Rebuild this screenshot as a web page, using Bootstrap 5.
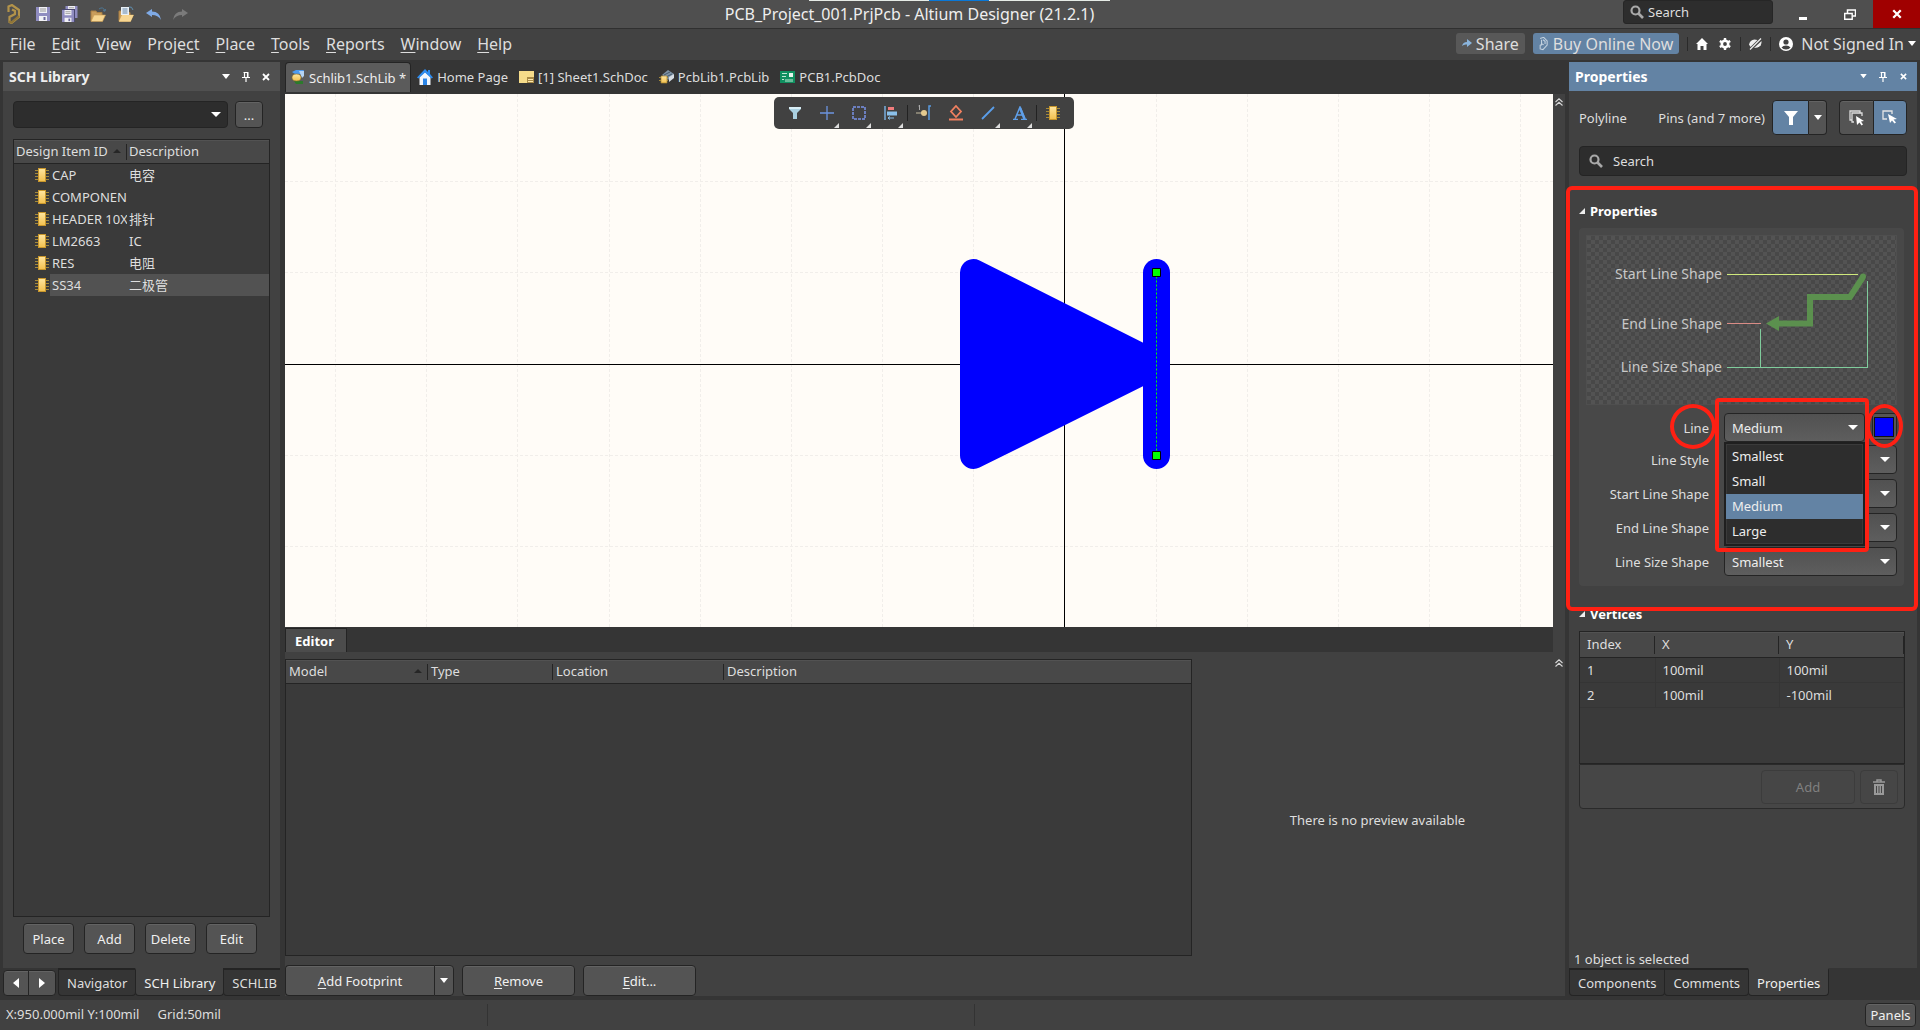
<!DOCTYPE html>
<html lang="en">
<head>
<meta charset="utf-8">
<meta name="viewport" content="width=device-width, initial-scale=1">
<title>PCB_Project_001.PrjPcb - Altium Designer (21.2.1)</title>
<link rel="stylesheet" href="https://cdn.jsdelivr.net/npm/bootstrap@5.3.0/dist/css/bootstrap.min.css">
<script src="https://cdn.jsdelivr.net/npm/bootstrap@5.3.0/dist/js/bootstrap.bundle.min.js"></script>
<style>
  :root { --edge:#242424; --pane:#414141; --deep:#353535; --field:#2d2d2d; --accent:#6383a4; --ink:#dedede; --mark:#ff2013; }
  body { font-family:"Noto Sans","Noto Sans CJK SC",sans-serif; font-size:13px; line-height:20px; color:var(--ink); background:var(--deep); }
  a { color:inherit; text-decoration:none; }
  svg { display:block; flex:none; }
  button, select, input { font:inherit; color:inherit; }
  ul { list-style:none; margin:0; padding:0; }
  u { text-underline-offset:2px; }

  .titlebar { height:29px; background:#4f4f4f; border-bottom:1px solid #303030; }
  .quick { gap:12px; padding:0 8px 0 7px; }
  .title-name { font-size:16px; color:#eee; }
  .top-stripe { top:0; left:50%; width:301px; height:1px; margin-left:-151px; background:linear-gradient(90deg,#e6ebe6 120px,#0a78d7 120px 180px,#e6ebe6 180px); }
  .title-search { width:150px; height:24px; background:var(--field); border:1px solid #262626; border-radius:3px; padding:0 6px; margin-right:6px; }
  .title-search input, .pane-search input { background:none; border:0; outline:0; width:100%; min-width:0; padding:0; }
  input::placeholder { color:var(--ink); opacity:1; }
  .win-btn { width:47px; height:28px; border:0; background:none; padding:0; color:#fff; }
  .win-close { background:#a00000; }

  .menubar { height:31px; background:#424242; font-size:16px; line-height:22px; padding:0 4px 2px 10px; }
  .menu-list { gap:16px; }
  .pill { height:21px; border-radius:3px; line-height:20px; border:0; padding:0 6px; gap:4px; }
  .pill-grey { background:#585858; } .pill-blue { background:var(--accent); }
  .bar-sep { width:1px; height:14px; background:#2a2a2a; }

  .workspace { gap:4px; padding:2px 3px 0 3px; min-height:0; }
  .side-left { flex:0 0 277px; min-width:0; overflow:hidden; } .side-right { flex:0 0 348px; min-width:0; }
  .mid-col { min-width:0; margin-left:1px; }
  .pane-head { height:29px; background:#505050; font-weight:700; font-size:14px; padding:0 4px 0 6px; color:#eee; }
  .pane-head.active-pane { background:var(--accent); color:#fff; }
  .pane-body { background:var(--pane); min-height:0; }
  .tool-mini { border:0; background:none; padding:0; width:20px; height:20px; }

  .tbtn { background:#545454; border:1px solid var(--edge); border-radius:4px; box-shadow:inset 0 1px 0 #636363; padding:0; color:#f0f0f0; display:flex; align-items:center; justify-content:center; }
  .combo { appearance:none; -webkit-appearance:none; background:#5a5a5a linear-gradient(#515151,#5e5e5e); border:1px solid var(--edge); border-radius:4px; height:29px; padding:0 8px 0 7px; color:#eee; width:100%; }
  .combo-wrap { position:relative; }
  .combo-wrap::after { content:""; position:absolute; right:7px; top:50%; margin-top:-3px; border:5px solid transparent; border-top-color:#fff; border-bottom:0; pointer-events:none; }
  .combo-dark { background:var(--field); height:27px; display:block; }
  .lib-pick { gap:7px; padding:10px 17px 11px 10px; }
  .dots-btn { width:28px; height:27px; }
  .grid-box { background:#3a3a3a; border:1px solid var(--edge); }
  .lib-box { margin:0 10px; }
  .grid-box table { table-layout:fixed; width:100%; border-collapse:collapse; }
  .grid-box th { font-weight:400; height:23px; background:#484848; border-bottom:1px solid var(--edge); padding:0 3px; position:relative; box-shadow:inset 0 1px 0 #525252; white-space:nowrap; }
  .split::after { content:""; position:absolute; right:0; top:4px; bottom:3px; width:1px; background:var(--edge); }
  .sort::before { content:""; position:absolute; right:6px; top:9px; border:4px solid transparent; border-bottom-color:#262626; border-top:0; }
  .grid-box .lib th { padding:0 2px; }
  .lib td { height:22px; padding:0 2px; white-space:nowrap; overflow:hidden; }
  .lib td:first-child { padding:0 0 0 21px; }
  .lib .part { gap:1px; } .lib .part span { flex:1; min-width:0; overflow:hidden; padding-left:2px; line-height:22px; }
  .lib .chosen span, .lib .chosen td + td { background:#525252; }
  .lib-btns { gap:10px; padding:6px 0 14px 20px; } .lib-btns .tbtn { width:51px; height:31px; }

  .ptab { height:28px; border:1px solid var(--edge); border-top-width:2px; border-radius:0 0 4px 4px; padding:0 8px; margin-right:-1px; display:flex; align-items:center; background:var(--deep); white-space:nowrap; color:var(--ink); }
  .ptab.on { background:var(--pane); border-top-color:var(--pane); color:#f0f0f0; }
  .ptab-long { flex:0 0 84px; }
  .pager { margin-right:2px; } .pager .tbtn { width:26px; height:26px; border-radius:4px 0 0 4px; } .pager .tbtn + .tbtn { border-radius:0 4px 4px 0; margin-left:-1px; width:28px; }

  .doc-tabs { height:32px; gap:5px; padding-bottom:2px; }
  .doc-tab { gap:4px; padding:0 3px; height:30px; white-space:nowrap; color:#ddd; }
  .doc-tab.open { background:#5b5b5b; border:1px solid var(--edge); border-bottom:0; border-radius:4px 4px 0 0; color:#eee; padding:0 4px; margin-right:-2px; }
  .canvas-box { height:533px; background:#fffcf7; min-height:0; }
  .canvas-box > svg { width:100%; height:100%; }
  .floatbar { top:3px; left:50%; transform:translateX(-145px); height:32px; background:var(--pane); border-radius:5px; padding:0 5px; }
  .fbtn { width:32px; height:32px; border:0; background:none; padding:0; position:relative; display:flex; align-items:center; justify-content:center; }
  .fbtn.more::after { content:""; position:absolute; right:4px; bottom:1px; border-style:solid; border-width:0 0 5px 5px; border-color:transparent transparent #ddd; }
  .fsep { width:1px; height:16px; background:#222; }
  .rail { flex:0 0 12px; background:var(--pane); padding:4px 2px; }
  .edit-strip { height:25px; background:var(--deep); margin-right:12px; box-shadow:12px 0 0 var(--pane); }
  .edit-tab { background:#4c4c4c; border:1px solid var(--edge); border-bottom:0; font-weight:700; padding:0 9px; color:#fff; height:24px; line-height:24px; width:62px; }
  .model-row { padding:7px 2px 0 0; }
  .model-box { flex:0 1 907px; }
  .foot-btns { gap:8px; padding:9px 0 0; } .foot-btns .tbtn { height:31px; }
  .foot-btns > .tbtn { width:113px; } .foot-btns .main-part { width:149px; } .foot-btns .drop-part { width:20px; }

  .filter-row { padding:9px 10px 11px; }
  .kinds { margin-right:7px; }
  .pane-search { height:30px; background:var(--field); border:1px solid var(--edge); border-radius:4px; padding:0 9px; gap:10px; margin:0 10px 14px; }
  .mode-btn { height:35px; width:34px; } .mode-drop { width:18px; margin-right:12px; } .mode-on { background:var(--accent); box-shadow:none; }
  .sec-title { font-weight:700; font-size:13px; color:#fff; gap:5px; height:20px; margin-bottom:7px; }
  .tri { border-style:solid; border-width:0 0 6px 6px; border-color:transparent transparent #eee; }
  .prop-sec { padding:11px 13px 21px 10px; }
  .prop-card { background:#484848; border-radius:4px; padding:7px 7px 10px; }
  .checker { background:repeating-conic-gradient(#484848 0 25%,#535353 0 50%) 0 0/8px 8px; border:1px solid #4f4f4f; }
  .frm { display:grid; grid-template-columns:123px 1fr; column-gap:15px; row-gap:5px; align-items:center; padding-top:8px; }
  .frm > label { text-align:right; }
  .frm > .first-cell { margin-bottom:-3px; line-height:29px; }
  .first-line { gap:7px; }
  .pop { top:29px; left:0; right:0; z-index:3; background:var(--field); border:2px solid #1f1f1f; outline:1px solid #3a3a3a; outline-offset:-3px; height:104px; }
  .pop li { height:25px; line-height:25px; padding:0 6px; color:#eee; } .pop li.sel { background:var(--accent); position:relative; z-index:1; }
  .swatch { display:block; width:25px; height:27px; padding:2px 1px; background:#555; border:1px solid var(--edge); border-radius:3px; }
  .swatch span { display:block; width:20px; height:20px; background:#00f; border:1px solid #111; }
  .ring { position:absolute; border:4px solid var(--mark); pointer-events:none; z-index:5; }
  .ring-sec { left:-3px; right:-1px; top:-4px; bottom:-4px; border-radius:6px; }
  .ring-menu { left:-9px; right:-4px; top:-15px; height:154px; border-radius:4px; }
  .ring-oval { border-radius:50%; }
  .ring-label { right:-7px; top:-10px; width:46px; height:45px; }
  .ring-swatch { left:-6px; top:-9px; width:37px; height:44px; }
  .vert-sec { padding:0 12px 0 10px; margin-top:-3px; }
  .vert-body { height:133px; }
  .vert td { height:25px; padding:0 7px; border-right:1px solid #353535; border-bottom:1px solid #353535; }
  .grid-box .vert th { height:25px; padding:0 7px; }
  .vert-foot { background:#464646; border:1px solid #2a2a2a; border-radius:0 0 4px 4px; height:45px; gap:5px; padding:0 6px; }
  .vert-foot button { background:none; border:1px solid #3c3c3c; border-radius:4px; height:34px; width:94px; color:#808080; display:flex; align-items:center; justify-content:center; }
  .vert-foot .bin { width:38px; }
  .sel-note { line-height:17px; padding-left:5px; }

  .statusbar { height:30px; background:var(--pane); padding:0 4px 0 6px; margin-top:4px; }
  .statusbar .cell { flex:0 0 482px; border-right:1px solid #333; height:22px; gap:18px; }
  .statusbar .cell + .cell { flex-basis:487px; }
  .panels-btn { width:51px; height:24px; }
</style>
</head>
<body class="vh-100 d-flex flex-column overflow-hidden">

<svg width="0" height="0" class="position-absolute" aria-hidden="true">
  <defs>
    <linearGradient id="gold" x1="0" x2="0" y1="0" y2="1"><stop offset="0" stop-color="#ffe6a0"/><stop offset="1" stop-color="#f2c04e"/></linearGradient>
    <symbol id="chip" viewBox="0 0 14 14"><path d="M0 2.500h14M0 5.500h14M0 8.500h14M0 11.500h14" stroke="#a58a3a"/><rect x="3.500" y=".5" width="7" height="13" fill="url(#gold)" stroke="#c9972c"/></symbol>
    <symbol id="lens" viewBox="0 0 14 14"><circle cx="5.500" cy="5.500" r="4" fill="none" stroke="#a8a8a8" stroke-width="2.200"/><path d="M8.500 8.500L13 13" stroke="#a8a8a8" stroke-width="2.600"/></symbol>
    <symbol id="down" viewBox="0 0 8 6"><path d="M0 0h8L4 5z" fill="#fff"/></symbol>
    <symbol id="pin" viewBox="0 0 8 10"><path d="M1.500.5h5M2.500 1v4M5.500 1v4M0 5.500h8M4 6v4" stroke="#fff" fill="none" stroke-width="1.200"/><path d="M5 1h1.500v4H5z" fill="#fff"/></symbol>
    <symbol id="cross" viewBox="0 0 8 8"><path d="M1 1l6 6M7 1L1 7" stroke="#fff" stroke-width="1.800"/></symbol>
    <symbol id="upup" viewBox="0 0 8 8"><path d="M.5 4L4 .8 7.500 4M.5 7.500L4 4.300l3.500 3.200" fill="none" stroke="#d8d8d8" stroke-width="1.100"/></symbol>
    <symbol id="folder" viewBox="0 0 16 14"><path d="M1 13V3h5l1 1.500h5V7" fill="#c99d5c" stroke="#a97f42"/><path d="M1 13.500L4 7h11.500l-3 6.500z" fill="#f7d692" stroke="#c79a50" stroke-width=".6"/></symbol>
    <symbol id="disk" viewBox="0 0 14 14"><path d="M0 0h14v14H0z" fill="#8f8cc0"/><path d="M3 0h8v6H3zM3 9h8v5H3z" fill="#f1f1f6"/><path d="M4 2h6M4 4h6" stroke="#999"/><path d="M7.500 10h2v3h-2z" fill="#6a679c"/></symbol>
  </defs>
</svg>

<header>
  <div class="titlebar d-flex align-items-start position-relative">
    <div class="top-stripe position-absolute"></div>
    <div class="quick d-flex align-items-center h-100">
      <svg class="me-1" width="13" height="20" viewBox="0 0 13 20"><path d="M1.500 8V2.500L5 1l7 5v7l-7.500 6-2-1v-5L8 10V7L5 5.500" fill="none" stroke="#b3934a" stroke-width="2.200"/><path d="M12 12l-7.500 6.500-2.500-1" fill="none" stroke="#8f7538" stroke-width="2.200"/></svg>
      <svg width="14" height="14"><use href="#disk"/></svg>
      <svg width="16" height="16" viewBox="0 0 16 16"><use href="#disk" x="3" y="0" width="13" height="12"/><path d="M0 3h13v13H0z" fill="#4a4870"/><use href="#disk" x="0" y="4" width="12" height="12"/></svg>
      <svg width="16" height="16" viewBox="0 -2 16 16"><use href="#folder" width="16" height="14"/><path d="M9 1q4-3 6 2m-2-.5l2 .8.500-2.300" fill="none" stroke="#4f7896"/></svg>
      <svg width="16" height="16" viewBox="0 -2 16 16"><use href="#folder" width="16" height="14"/><path d="M3-1h8v8H3z" fill="#e9f0f6"/><path d="M4.500 1h5M4.500 3h5M4.500 5h5" stroke="#6787a8"/><path d="M4 7h11.500l-3 6.500H1z" fill="#f7d692"/><path d="M11-1q3-1 4 3" fill="none" stroke="#5f8fb0"/></svg>
      <svg width="15" height="11" viewBox="0 0 15 11"><path d="M0 4l6-4v2.500q8 0 9 8.500-3-5-9-5V8z" fill="#7faae6"/></svg>
      <svg width="15" height="11" viewBox="0 0 15 11"><path d="M15 4L9 0v2.500Q1 2.500 0 11q3-5 9-5V8z" fill="#7b7b7b"/></svg>
    </div>
    <div class="title-name align-self-center text-nowrap flex-fill text-center">PCB_Project_001.PrjPcb - Altium Designer (21.2.1)</div>
    <div class="d-flex justify-content-end">
      <label class="title-search d-flex align-items-center gap-1"><svg width="14" height="14"><use href="#lens"/></svg><input type="text" placeholder="Search" aria-label="Search"></label>
      <button class="win-btn" aria-label="Minimize"><svg class="m-auto mt-2" width="8" height="3"><path d="M0 0h8v3H0z" fill="#fff"/></svg></button>
      <button class="win-btn" aria-label="Restore"><svg class="m-auto" width="12" height="11" viewBox="0 0 12 11"><path d="M3.500 4V1h8v6h-3" fill="none" stroke="#fff" stroke-width="1.500"/><path d="M.7 4.500h7.500v5.800H.7z" fill="none" stroke="#fff" stroke-width="1.400"/></svg></button>
      <button class="win-btn win-close" aria-label="Close"><svg class="m-auto" width="10" height="10" viewBox="0 0 8 8"><use href="#cross"/></svg></button>
    </div>
  </div>
  <nav class="menubar d-flex align-items-center justify-content-between" aria-label="Main menu">
    <ul class="menu-list d-flex">
      <li><a href="#"><u>F</u>ile</a></li><li><a href="#"><u>E</u>dit</a></li><li><a href="#"><u>V</u>iew</a></li><li><a href="#">Proje<u>c</u>t</a></li><li><a href="#"><u>P</u>lace</a></li><li><a href="#"><u>T</u>ools</a></li><li><a href="#"><u>R</u>eports</a></li><li><a href="#"><u>W</u>indow</a></li><li><a href="#"><u>H</u>elp</a></li>
    </ul>
    <div class="d-flex align-items-center">
      <button class="pill pill-grey d-flex align-items-center"><svg width="10" height="9" viewBox="0 0 10 9"><path d="M0 7q1-4 5-4V0l5 4-5 4V5.500Q2 5 0 7z" fill="#8ab4dc"/></svg>Share</button>
      <button class="pill pill-blue d-flex align-items-center ms-2"><svg width="10" height="14" viewBox="0 0 13 20"><path d="M1 2l5-1.500 5 5v6L5 18l-4-1v-5l3-2 2 1M3 4v8M5 4l3 2v4" fill="none" stroke="#c5d3e0" stroke-width="1.500"/></svg>Buy Online Now</button>
      <span class="bar-sep ms-2 me-2"></span>
      <svg width="12" height="12" viewBox="0 0 12 12"><path d="M6 0l6 6h-1.500v6h-3V8h-3v4h-3V6H0z" fill="#fff"/></svg>
      <svg class="ms-2 me-2" width="16" height="12" viewBox="-3 0 16 12"><circle cx="6" cy="6" r="3.200" fill="none" stroke="#fff" stroke-width="2.600"/><path d="M6 0v2.500M6 9.500V12M.8 3l2.200 1.300M9 7.700L11.200 9M.8 9L3 7.700M9 4.300L11.200 3" stroke="#fff" stroke-width="2.400"/></svg>
      <span class="bar-sep me-2"></span>
      <svg width="13" height="12" viewBox="0 0 13 12"><path d="M0 6.500q1-4.500 5.500-5L8.500 2 1.500 9z" fill="#eee"/><path d="M5 10l7.500-7q.5 5-4 6.500z" fill="#eee"/><path d="M1 11.500L12 .5" stroke="#eee" stroke-width="1.300"/></svg>
      <span class="bar-sep ms-2 me-2"></span>
      <svg width="14" height="14" viewBox="0 0 14 14"><circle cx="7" cy="7" r="7" fill="#fff"/><circle cx="7" cy="5" r="2.600" fill="#424242"/><path d="M2.500 10.500q1.500-2 4.500-2t4.500 2q-1.500 2-4.500 2t-4.500-2z" fill="#424242"/></svg>
      <a href="#" class="ms-2 d-flex align-items-center gap-1">Not Signed In<svg width="8" height="6"><use href="#down"/></svg></a>
    </div>
  </nav>
</header>

<main class="workspace d-flex flex-fill">

  <section class="side-left d-flex flex-column" aria-label="SCH Library">
    <div class="pane-head d-flex align-items-center justify-content-between">SCH Library
      <span class="d-flex"><button class="tool-mini" aria-label="Menu"><svg class="m-auto" width="8" height="6"><use href="#down"/></svg></button><button class="tool-mini" aria-label="Pin"><svg class="m-auto" width="8" height="10"><use href="#pin"/></svg></button><button class="tool-mini" aria-label="Close"><svg class="m-auto" width="8" height="8"><use href="#cross"/></svg></button></span>
    </div>
    <div class="pane-body flex-fill d-flex flex-column">
      <div class="lib-pick d-flex">
        <div class="combo-wrap flex-fill"><select class="combo combo-dark" aria-label="Library"><option></option></select></div>
        <button class="tbtn dots-btn">...</button>
      </div>
      <div class="grid-box lib-box flex-fill overflow-hidden">
        <table class="lib">
          <colgroup><col style="width:113px"><col></colgroup>
          <thead><tr><th class="split sort">Design Item ID</th><th>Description</th></tr></thead>
          <tbody>
            <tr><td><div class="part d-flex align-items-center"><svg width="14" height="14"><use href="#chip"/></svg><span>CAP</span></div></td><td>电容</td></tr>
            <tr><td><div class="part d-flex align-items-center"><svg width="14" height="14"><use href="#chip"/></svg><span>COMPONEN</span></div></td><td></td></tr>
            <tr><td><div class="part d-flex align-items-center"><svg width="14" height="14"><use href="#chip"/></svg><span>HEADER 10X</span></div></td><td>排针</td></tr>
            <tr><td><div class="part d-flex align-items-center"><svg width="14" height="14"><use href="#chip"/></svg><span>LM2663</span></div></td><td>IC</td></tr>
            <tr><td><div class="part d-flex align-items-center"><svg width="14" height="14"><use href="#chip"/></svg><span>RES</span></div></td><td>电阻</td></tr>
            <tr class="chosen"><td><div class="part d-flex align-items-center"><svg width="14" height="14"><use href="#chip"/></svg><span>SS34</span></div></td><td>二极管</td></tr>
          </tbody>
        </table>
      </div>
      <div class="lib-btns d-flex"><button class="tbtn">Place</button><button class="tbtn">Add</button><button class="tbtn">Delete</button><button class="tbtn">Edit</button></div>
    </div>
    <div class="d-flex overflow-hidden">
      <div class="pager d-flex align-items-end"><button class="tbtn" aria-label="Previous"><svg width="6" height="10"><path d="M6 0v10L0 5z" fill="#fff"/></svg></button><button class="tbtn" aria-label="Next"><svg width="6" height="10"><path d="M0 0v10l6-5z" fill="#fff"/></svg></button></div>
      <a href="#" class="ptab">Navigator</a><a href="#" class="ptab on">SCH Library</a><a href="#" class="ptab ptab-long">SCHLIB</a>
    </div>
  </section>

  <section class="mid-col flex-fill d-flex flex-column" aria-label="Documents">
    <div class="doc-tabs d-flex align-items-center">
      <a href="#" class="doc-tab open d-flex align-items-center"><svg width="15" height="15" viewBox="0 0 15 15"><path d="M2 2l4-2h8l-2 4H5z" fill="#4e9bf0"/><path d="M9 1h5v5l-2 2z" fill="#b4d4f5"/><path d="M4 11h9v3H6z" fill="#2c7a2c"/><ellipse cx="6.500" cy="7.500" rx="4.500" ry="3.500" fill="url(#gold)" stroke="#8a6a20" stroke-width=".6"/></svg>Schlib1.SchLib *</a>
      <a href="#" class="doc-tab d-flex align-items-center"><svg width="16" height="16" viewBox="0 0 16 16"><path d="M2.500 8v8h11V8L8 3z" fill="#f2f6fb"/><path d="M8 0L0 8.500l1.500 1L8 3.500l6.500 6 1.500-1L13 5V1h-2v2z" fill="#2d8cf0"/><path d="M6 9.500h4V16H6z" fill="#2a85e8"/></svg>Home Page</a>
      <a href="#" class="doc-tab d-flex align-items-center"><svg width="15" height="12" viewBox="0 0 15 12"><path d="M0 0h15v12H0z" fill="#f6dc8a"/><path d="M8 6h7v6H8z" fill="#a88a46"/><path d="M9 8.500h5M9 10.500h5" stroke="#ffe9ae"/></svg>[1] Sheet1.SchDoc</a>
      <a href="#" class="doc-tab d-flex align-items-center"><svg width="15" height="14" viewBox="0 0 15 14"><path d="M3 5l6-5 6 4-6 6z" fill="#7e93a6"/><path d="M5 5l6-3M7 7l6-3" stroke="#45586a"/><path d="M10 7l5-3v4l-5 4z" fill="#d6dde4"/><path d="M0 7.500h9M0 10.500h9" stroke="#a58a3a"/><path d="M2 6h6v7H2z" fill="url(#gold)" stroke="#a88430" stroke-width=".7"/></svg>PcbLib1.PcbLib</a>
      <a href="#" class="doc-tab d-flex align-items-center"><svg width="15" height="12" viewBox="0 0 15 12"><path d="M0 0h15v12H0z" fill="#109060"/><path d="M9 2h4v4H9z" fill="#e8f5ee"/><path d="M2 2.500h5M2 5.500h4M2 8.500h2M6 8v3M8 8v3M10 8v3M12 8v3" stroke="#bfe8d3"/></svg>PCB1.PcbDoc</a>
    </div>
    <div class="d-flex">
      <div class="canvas-box position-relative flex-fill">
        <svg viewBox="285 94 1268 533" preserveAspectRatio="xMidYMid slice" role="img" aria-label="Diode symbol">
          <path d="M335.500 94v533M426.500 94v533M517.500 94v533M609.500 94v533M700.500 94v533M791.500 94v533M882.500 94v533M973.500 94v533M1156.500 94v533M1247.500 94v533M1338.500 94v533M1429.500 94v533M1520.500 94v533M285 181.500h1268M285 272.500h1268M285 455.500h1268M285 546.500h1268" stroke="#f1eeea" stroke-dasharray="3 2"/>
          <path d="M1064.500 94v533M285 364.500h1268" stroke="#000"/>
          <path d="M973.500 272.500v183l183-91z" fill="#00f" stroke="#00f" stroke-width="27" stroke-linejoin="round"/>
          <path d="M1156.500 272.500v183" stroke="#00f" stroke-width="27" stroke-linecap="round"/>
          <path d="M1156.500 272.500v183" stroke="#0f0" stroke-dasharray="2 2"/>
          <path d="M1152.500 268.500h8v8h-8zM1152.500 451.500h8v8h-8z" fill="#0f0" stroke="#000"/>
        </svg>
        <div class="floatbar position-absolute d-flex align-items-center" role="toolbar" aria-label="Active bar">
          <button class="fbtn" aria-label="Filter"><svg width="14" height="12" viewBox="0 0 14 12"><path d="M1 0h12v2L9 6v6H5V6L1 2z" fill="#a9cfe0"/><path d="M1 0h12v2H1z" fill="#d8edf5"/></svg></button>
          <button class="fbtn more" aria-label="Move"><svg width="14" height="14"><path d="M7 0v14M0 7h14" stroke="#6c94e0" stroke-width="1.300"/></svg></button>
          <button class="fbtn more" aria-label="Select area"><svg width="14" height="14"><path d="M1 1h12v12H1z" fill="none" stroke="#7a93e8" stroke-width="1.500" stroke-dasharray="3 1"/></svg></button>
          <button class="fbtn more" aria-label="Align"><svg width="14" height="14"><path d="M1 0v14" stroke="#79aede" stroke-width="1.500"/><path d="M4 1h6v3H4z" fill="#f07c7c"/><path d="M3 5.500h10v4H3z" fill="#8ac0ea"/><path d="M4 12h6M6 10.500L4 12l2 1.500" stroke="#8ac0ea" fill="none"/></svg></button>
          <span class="fsep"></span>
          <button class="fbtn" aria-label="Place pin"><svg width="16" height="16"><path d="M3.500 0v5M2.500 1h1" stroke="#aaa"/><path d="M0 8h8" stroke="#c8bfa2"/><circle cx="8" cy="8" r="3" fill="#e3c98f"/><path d="M15 1h-2v14" stroke="#5a9be0" stroke-width="1.500" fill="none"/></svg></button>
          <button class="fbtn" aria-label="Place port"><svg width="14" height="16"><path d="M7 1l5 5.500L7 12 2 6.500zM0 14.500h14" fill="none" stroke="#f08060" stroke-width="1.800"/></svg></button>
          <button class="fbtn more" aria-label="Place line"><svg width="14" height="14"><path d="M1 13L13 1" stroke="#5a9eea" stroke-width="1.800"/></svg></button>
          <button class="fbtn more" aria-label="Place text"><svg width="14" height="14"><path d="M0 13.500h5M8 13.500h6M2 13L7 1l5 12M4 9h6" fill="none" stroke="#5f9fe8" stroke-width="1.500"/><path d="M7 2l4.500 11" stroke="#5f9fe8" stroke-width="2.500"/></svg></button>
          <span class="fsep"></span>
          <button class="fbtn" aria-label="Place part"><svg width="14" height="14"><use href="#chip"/></svg></button>
        </div>
      </div>
      <div class="rail"><svg width="8" height="8"><use href="#upup"/></svg></div>
    </div>
    <div class="edit-strip d-flex align-items-end"><a href="#" class="edit-tab">Editor</a></div>
    <div class="pane-body flex-fill d-flex flex-column">
      <div class="model-row d-flex flex-fill">
        <div class="grid-box model-box">
          <table><colgroup><col style="width:142px"><col style="width:125px"><col style="width:171px"><col></colgroup>
            <thead><tr><th class="split sort">Model</th><th class="split">Type</th><th class="split">Location</th><th>Description</th></tr></thead></table>
        </div>
        <div class="flex-fill d-flex align-items-center justify-content-center pt-4 ps-2">There is no preview available</div>
        <svg width="8" height="8"><use href="#upup"/></svg>
      </div>
      <div class="foot-btns d-flex">
        <div class="d-flex"><button class="tbtn main-part rounded-end-0 border-end-0"><span><u>A</u>dd Footprint</span></button><button class="tbtn drop-part rounded-start-0" aria-label="More"><svg width="8" height="6"><use href="#down"/></svg></button></div>
        <button class="tbtn"><span><u>R</u>emove</span></button>
        <button class="tbtn"><span><u>E</u>dit...</span></button>
      </div>
    </div>
  </section>

  <section class="side-right d-flex flex-column" aria-label="Properties">
    <div class="pane-head active-pane d-flex align-items-center justify-content-between">Properties
      <span class="d-flex"><button class="tool-mini" aria-label="Menu"><svg class="m-auto" width="7" height="5" viewBox="0 0 8 6"><use href="#down"/></svg></button><button class="tool-mini" aria-label="Pin"><svg class="m-auto" width="8" height="10"><use href="#pin"/></svg></button><button class="tool-mini" aria-label="Close"><svg class="m-auto" width="7" height="7" viewBox="0 0 8 8"><use href="#cross"/></svg></button></span>
    </div>
    <div class="pane-body flex-fill d-flex flex-column">
      <div class="filter-row d-flex align-items-center">
        <span class="me-auto">Polyline</span><span class="kinds">Pins (and 7 more)</span>
        <button class="tbtn mode-btn mode-on rounded-end-0" style="width:37px" aria-label="Filter"><svg width="14" height="14"><path d="M0 0h14L9 6v8H5V6z" fill="#fff"/></svg></button><button class="tbtn mode-btn mode-drop rounded-start-0 border-start-0" aria-label="Filter options"><svg width="8" height="6"><use href="#down"/></svg></button>
        <button class="tbtn mode-btn rounded-end-0 border-end-0" aria-label="Select many"><svg width="16" height="16"><path d="M3 10H1V1h10v2M5 12H3V3h10v3" fill="none" stroke="#ddd" stroke-width="1.300"/><path d="M7 6l8 5-3 .6 2 3-1.500 1-2-3L8 15z" fill="#fff"/></svg></button><button class="tbtn mode-btn mode-on rounded-start-0" aria-label="Select one"><svg width="16" height="16"><path d="M5 9H1V1h9v3" fill="none" stroke="#e5e5e5" stroke-width="1.300"/><path d="M6 4l9 5-3.500.6 2.500 3-1.500 1-2.500-3L8 13z" fill="#fff"/></svg></button>
      </div>
      <label class="pane-search d-flex align-items-center"><svg width="14" height="14"><use href="#lens"/></svg><input type="text" placeholder="Search" aria-label="Search properties"></label>

      <div class="prop-sec position-relative">
        <div class="ring ring-sec"></div>
        <div class="sec-title d-flex align-items-center"><span class="tri"></span>Properties</div>
        <div class="prop-card">
          <div class="checker">
            <svg width="100%" viewBox="0 0 309 168" font-size="14" fill="#c8c8c8" text-anchor="end">
              <text x="135" y="43">Start Line Shape</text><text x="135" y="93">End Line Shape</text><text x="135" y="136">Line Size Shape</text>
              <path d="M140 38.500h131" stroke="#cfe87c"/><path d="M140 87.500h34" stroke="#d98c86"/><path d="M140 131.500h141M173.500 93v38M280.500 45v87" stroke="#7fcc9c" fill="none"/>
              <path d="M190 87.500h33v-26.500h40l13-20" fill="none" stroke="#5b904e" stroke-width="6"/><circle cx="276" cy="40.500" r="3" fill="#5b904e"/><path d="M179 87.500l13-7.500v15z" fill="#5b904e"/>
            </svg>
          </div>
          <div class="frm">
            <label for="f1" class="first-cell position-relative">Line<span class="ring ring-oval ring-label"></span></label>
            <div class="first-cell first-line d-flex">
              <div class="combo-wrap flex-fill"><select id="f1" class="combo"><option>Medium</option></select>
                <ul class="pop position-absolute" role="listbox"><li role="option">Smallest</li><li role="option">Small</li><li role="option" class="sel" aria-selected="true">Medium</li><li role="option">Large</li></ul>
                <div class="ring ring-menu"></div>
              </div>
              <div class="position-relative"><button class="swatch" aria-label="Line colour"><span></span></button><div class="ring ring-oval ring-swatch"></div></div>
            </div>
            <label for="f2">Line Style</label><div class="combo-wrap"><select id="f2" class="combo" aria-label="Line Style"><option></option></select></div>
            <label for="f3">Start Line Shape</label><div class="combo-wrap"><select id="f3" class="combo" aria-label="Start Line Shape"><option></option></select></div>
            <label for="f4">End Line Shape</label><div class="combo-wrap"><select id="f4" class="combo" aria-label="End Line Shape"><option></option></select></div>
            <label for="f5">Line Size Shape</label><div class="combo-wrap"><select id="f5" class="combo"><option>Smallest</option></select></div>
          </div>
        </div>
      </div>

      <div class="vert-sec">
        <div class="sec-title d-flex align-items-center"><span class="tri"></span>Vertices</div>
        <div class="grid-box vert-body">
          <table class="vert"><colgroup><col style="width:75px"><col style="width:124px"><col></colgroup>
            <thead><tr><th class="split">Index</th><th class="split">X</th><th class="split">Y</th></tr></thead>
            <tbody><tr><td>1</td><td>100mil</td><td>100mil</td></tr><tr><td>2</td><td>100mil</td><td>-100mil</td></tr></tbody></table>
        </div>
        <div class="vert-foot d-flex align-items-center justify-content-end"><button disabled>Add</button><button class="bin" disabled aria-label="Delete vertex"><svg width="12" height="16" viewBox="0 0 12 16"><path d="M0 3h12M4 2.500V1h4v1.500" fill="none" stroke="#999" stroke-width="1.500"/><path d="M1 5h10v11H1z" fill="#999"/><path d="M3.500 7v7M6 7v7M8.500 7v7" stroke="#464646"/></svg></button></div>
      </div>
      <div class="sel-note mt-auto">1 object is selected</div>
    </div>
    <div class="d-flex"><a href="#" class="ptab">Components</a><a href="#" class="ptab">Comments</a><a href="#" class="ptab on">Properties</a></div>
  </section>
</main>

<footer class="statusbar d-flex align-items-center">
  <div class="cell d-flex"><span>X:950.000mil Y:100mil</span><span>Grid:50mil</span></div><div class="cell"></div>
  <button class="tbtn panels-btn ms-auto">Panels</button>
</footer>
</body>
</html>
